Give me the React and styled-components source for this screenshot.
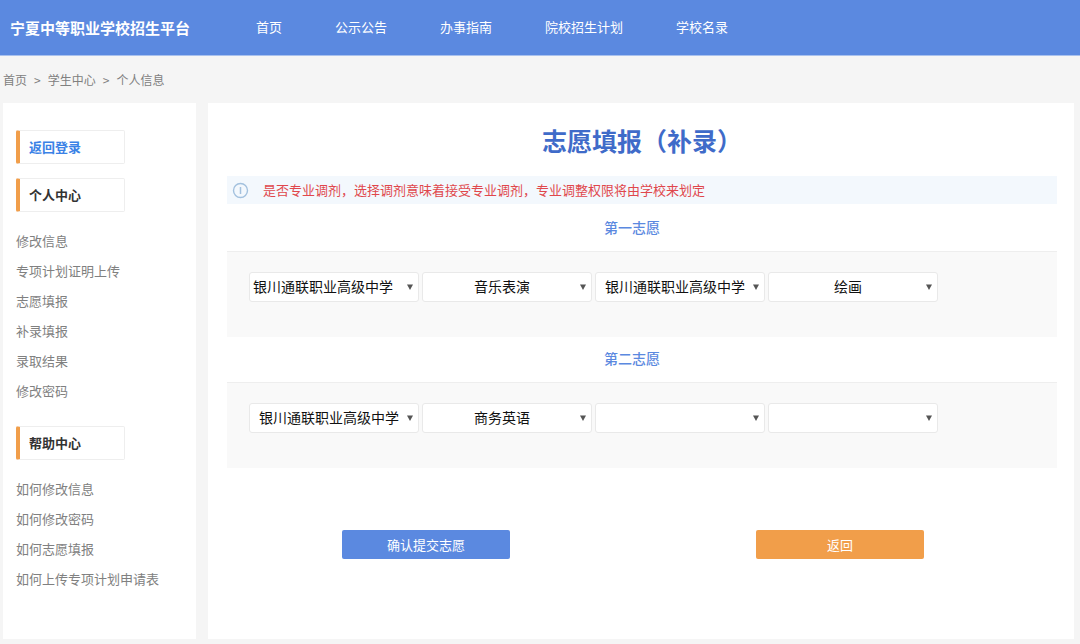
/**
 * @class: App
 * @scope: Student centre, application form (supplementary admission)
 */
import React                         from 'react';
import styled, { createGlobalStyle, ThemeProvider } from 'styled-components';

const theme = {
    colors: {
        primary: '#5b89e0',
        title: '#3f6bc9',
        accent: '#f19e4a',
        danger: '#e0474c',
        page: '#f5f5f5',
        line: '#eeeeee',
        muted: '#808080',
    },
};

const GlobalStyle = createGlobalStyle`
    * {
        box-sizing: border-box;
    }
    body {
        margin: 0;
        background: ${ p => p.theme.colors.page };
        color: #333;
        font-family: "Noto Sans CJK SC", "Liberation Sans", sans-serif;
        font-size: 13px;
    }
    a {
        color: inherit;
        text-decoration: none;
    }
`;

const SHeader = styled.header`
    display: flex;
    align-items: center;
    height: 56px;
    padding: 0 10px;
    background: ${ p => p.theme.colors.primary };
    border-bottom: 1px solid #a9c1ee;
    color: #fff;
`;

const SBrand = styled.a`
    flex: 0 0 246px;
    font-size: 15px;
    font-weight: bold;
    line-height: 24px;
`;

const SNav = styled.nav`
    display: flex;
    gap: 53px;
    padding-bottom: 2px;
    line-height: 24px;
`;

const SBreadcrumb = styled.nav`
    display: flex;
    align-items: center;
    gap: 7px;
    height: 47px;
    padding: 0 3px;
    color: ${ p => p.theme.colors.muted };
    font-size: 12px;
`;

const SLayout = styled.div`
    display: grid;
    grid-template-columns: 193px 1fr;
    gap: 12px;
    padding: 0 6px 5px 3px;
`;

const SSidebar = styled.aside`
    padding: 27px 13px 20px;
    background: #fff;
`;

const SMenuTitle = styled.h3`
    width: 109px;
    margin: 0 0 14px;
    padding-left: 9px;
    border: 1px solid ${ p => p.theme.colors.line };
    border-left: 4px solid ${ p => p.theme.colors.accent };
    border-radius: 2px;
    color: ${ p => p.$active ? '#3b82e6' : '#333' };
    font-size: 13px;
    line-height: 32px;
`;

const SMenu = styled.ul`
    margin: 0 0 20px;
    padding: 0;
    list-style: none;
    color: ${ p => p.theme.colors.muted };
    line-height: 30px;
    white-space: nowrap;
`;

const SMain = styled.main`
    padding: 21px 17px 80px 19px;
    background: #fff;
`;

const STitle = styled.h1`
    margin: 0 0 20px;
    color: ${ p => p.theme.colors.title };
    font-size: 25px;
    line-height: 32px;
    text-align: center;
`;

const SNotice = styled.div`
    display: flex;
    align-items: center;
    gap: 14px;
    height: 28px;
    margin-bottom: 2px;
    padding: 0 5px;
    background: #f3f8fd;
    color: ${ p => p.theme.colors.danger };
    line-height: 26px;
`;

const SSectionTitle = styled.h2`
    margin: 0;
    padding: 0 20px 2px 0;
    color: ${ p => p.theme.colors.primary };
    font-size: 14px;
    font-weight: 500;
    line-height: 43px;
    text-align: center;
`;

const SBand = styled.div`
    display: flex;
    gap: 3px;
    padding: 20px 22px 35px;
    background: #f9f9f9;
    border-top: 1px solid ${ p => p.theme.colors.line };
`;

// the select and its arrow share one grid cell
const SField = styled.div`
    display: grid;
    flex: 0 1 170px;
    align-items: center;

    > * {
        grid-area: 1 / 1;
    }
    > svg {
        justify-self: end;
        margin-right: 6px;
        pointer-events: none;
    }
`;

const SSelect = styled.select`
    appearance: none;
    width: 100%;
    height: 30px;
    padding: ${ p => p.$align === 'left' ? '0 20px 2px 3px' : '0 10px 2px 0' };
    border: 1px solid #e9e9e9;
    border-radius: 3px;
    background: #fff;
    color: #111;
    font-family: inherit;
    font-size: 14px;
    text-align-last: ${ p => p.$align || 'center' };
`;

const SActions = styled.div`
    display: flex;
    justify-content: space-between;
    padding: 62px 133px 0 115px;
`;

const SButton = styled.button`
    width: 168px;
    height: 29px;
    padding: 0;
    border: 0;
    border-radius: 2px;
    background: ${ p => p.theme.colors[p.$color] };
    color: #fff;
    font-family: inherit;
    font-size: 13px;
`;

const NAV = ['首页', '公示公告', '办事指南', '院校招生计划', '学校名录'];

const PERSONAL = ['修改信息', '专项计划证明上传', '志愿填报', '补录填报', '录取结果', '修改密码'];

const HELP = ['如何修改信息', '如何修改密码', '如何志愿填报', '如何上传专项计划申请表'];

const CHOICES = [
    {
        title: '第一志愿',
        fields: [
            { value: '银川通联职业高级中学', align: 'left' },
            { value: '音乐表演' },
            { value: '银川通联职业高级中学' },
            { value: '绘画' },
        ],
    },
    {
        title: '第二志愿',
        fields: [
            { value: '银川通联职业高级中学' },
            { value: '商务英语' },
            { value: '' },
            { value: '' },
        ],
    },
];

const InfoIcon = () => (
    <svg width="17" height="17" viewBox="0 0 17 17" fill="none" stroke="#a3c1de" aria-hidden="true">
        <circle cx="8.5" cy="8.5" r="7" strokeWidth="1.4"/>
        <path d="M8.5 5v7" strokeWidth="1.5"/>
    </svg>
);

const ArrowIcon = () => (
    <svg width="6" height="6" viewBox="0 0 6 6" fill="#555" aria-hidden="true">
        <path d="M0 0.5h6L3 6z"/>
    </svg>
);

const Menu = ({ items }) => (
    <SMenu>
        { items.map(item => <li key={ item }><a href="#">{ item }</a></li>) }
    </SMenu>
);

const Choice = ({ title, fields }) => (
    <section>
        <SSectionTitle>{ title }</SSectionTitle>
        <SBand>
            { fields.map(({ value, align }, index) => (
                <SField key={ index }>
                    <SSelect
                        aria-label={ `${title} ${index + 1}` }
                        defaultValue={ value }
                        $align={ align }
                    >
                        <option value={ value }>{ value }</option>
                    </SSelect>
                    <ArrowIcon/>
                </SField>
            )) }
        </SBand>
    </section>
);

export default class App extends React.PureComponent {

    renderSidebar () {
        return (
            <SSidebar>
                <SMenuTitle $active={ true }><a href="#">返回登录</a></SMenuTitle>
                <SMenuTitle>个人中心</SMenuTitle>
                <Menu items={ PERSONAL }/>
                <SMenuTitle>帮助中心</SMenuTitle>
                <Menu items={ HELP }/>
            </SSidebar>
        );
    }

    renderContent () {
        return (
            <SMain>
                <STitle>志愿填报（补录）</STitle>
                <SNotice>
                    <InfoIcon/>
                    <span>是否专业调剂，选择调剂意味着接受专业调剂，专业调整权限将由学校来划定</span>
                </SNotice>
                { CHOICES.map(choice => <Choice key={ choice.title } { ...choice }/>) }
                <SActions>
                    <SButton type="submit" $color="primary">确认提交志愿</SButton>
                    <SButton type="button" $color="accent">返回</SButton>
                </SActions>
            </SMain>
        );
    }

    render () {
        return (
            <ThemeProvider theme={ theme }>
                <GlobalStyle/>
                <SHeader>
                    <SBrand href="#">宁夏中等职业学校招生平台</SBrand>
                    <SNav>
                        { NAV.map(item => <a key={ item } href="#">{ item }</a>) }
                    </SNav>
                </SHeader>
                <SBreadcrumb>
                    <a href="#">首页</a>
                    <span>&gt;</span>
                    <a href="#">学生中心</a>
                    <span>&gt;</span>
                    <span>个人信息</span>
                </SBreadcrumb>
                <SLayout>
                    { this.renderSidebar() }
                    { this.renderContent() }
                </SLayout>
            </ThemeProvider>
        );
    }
}
